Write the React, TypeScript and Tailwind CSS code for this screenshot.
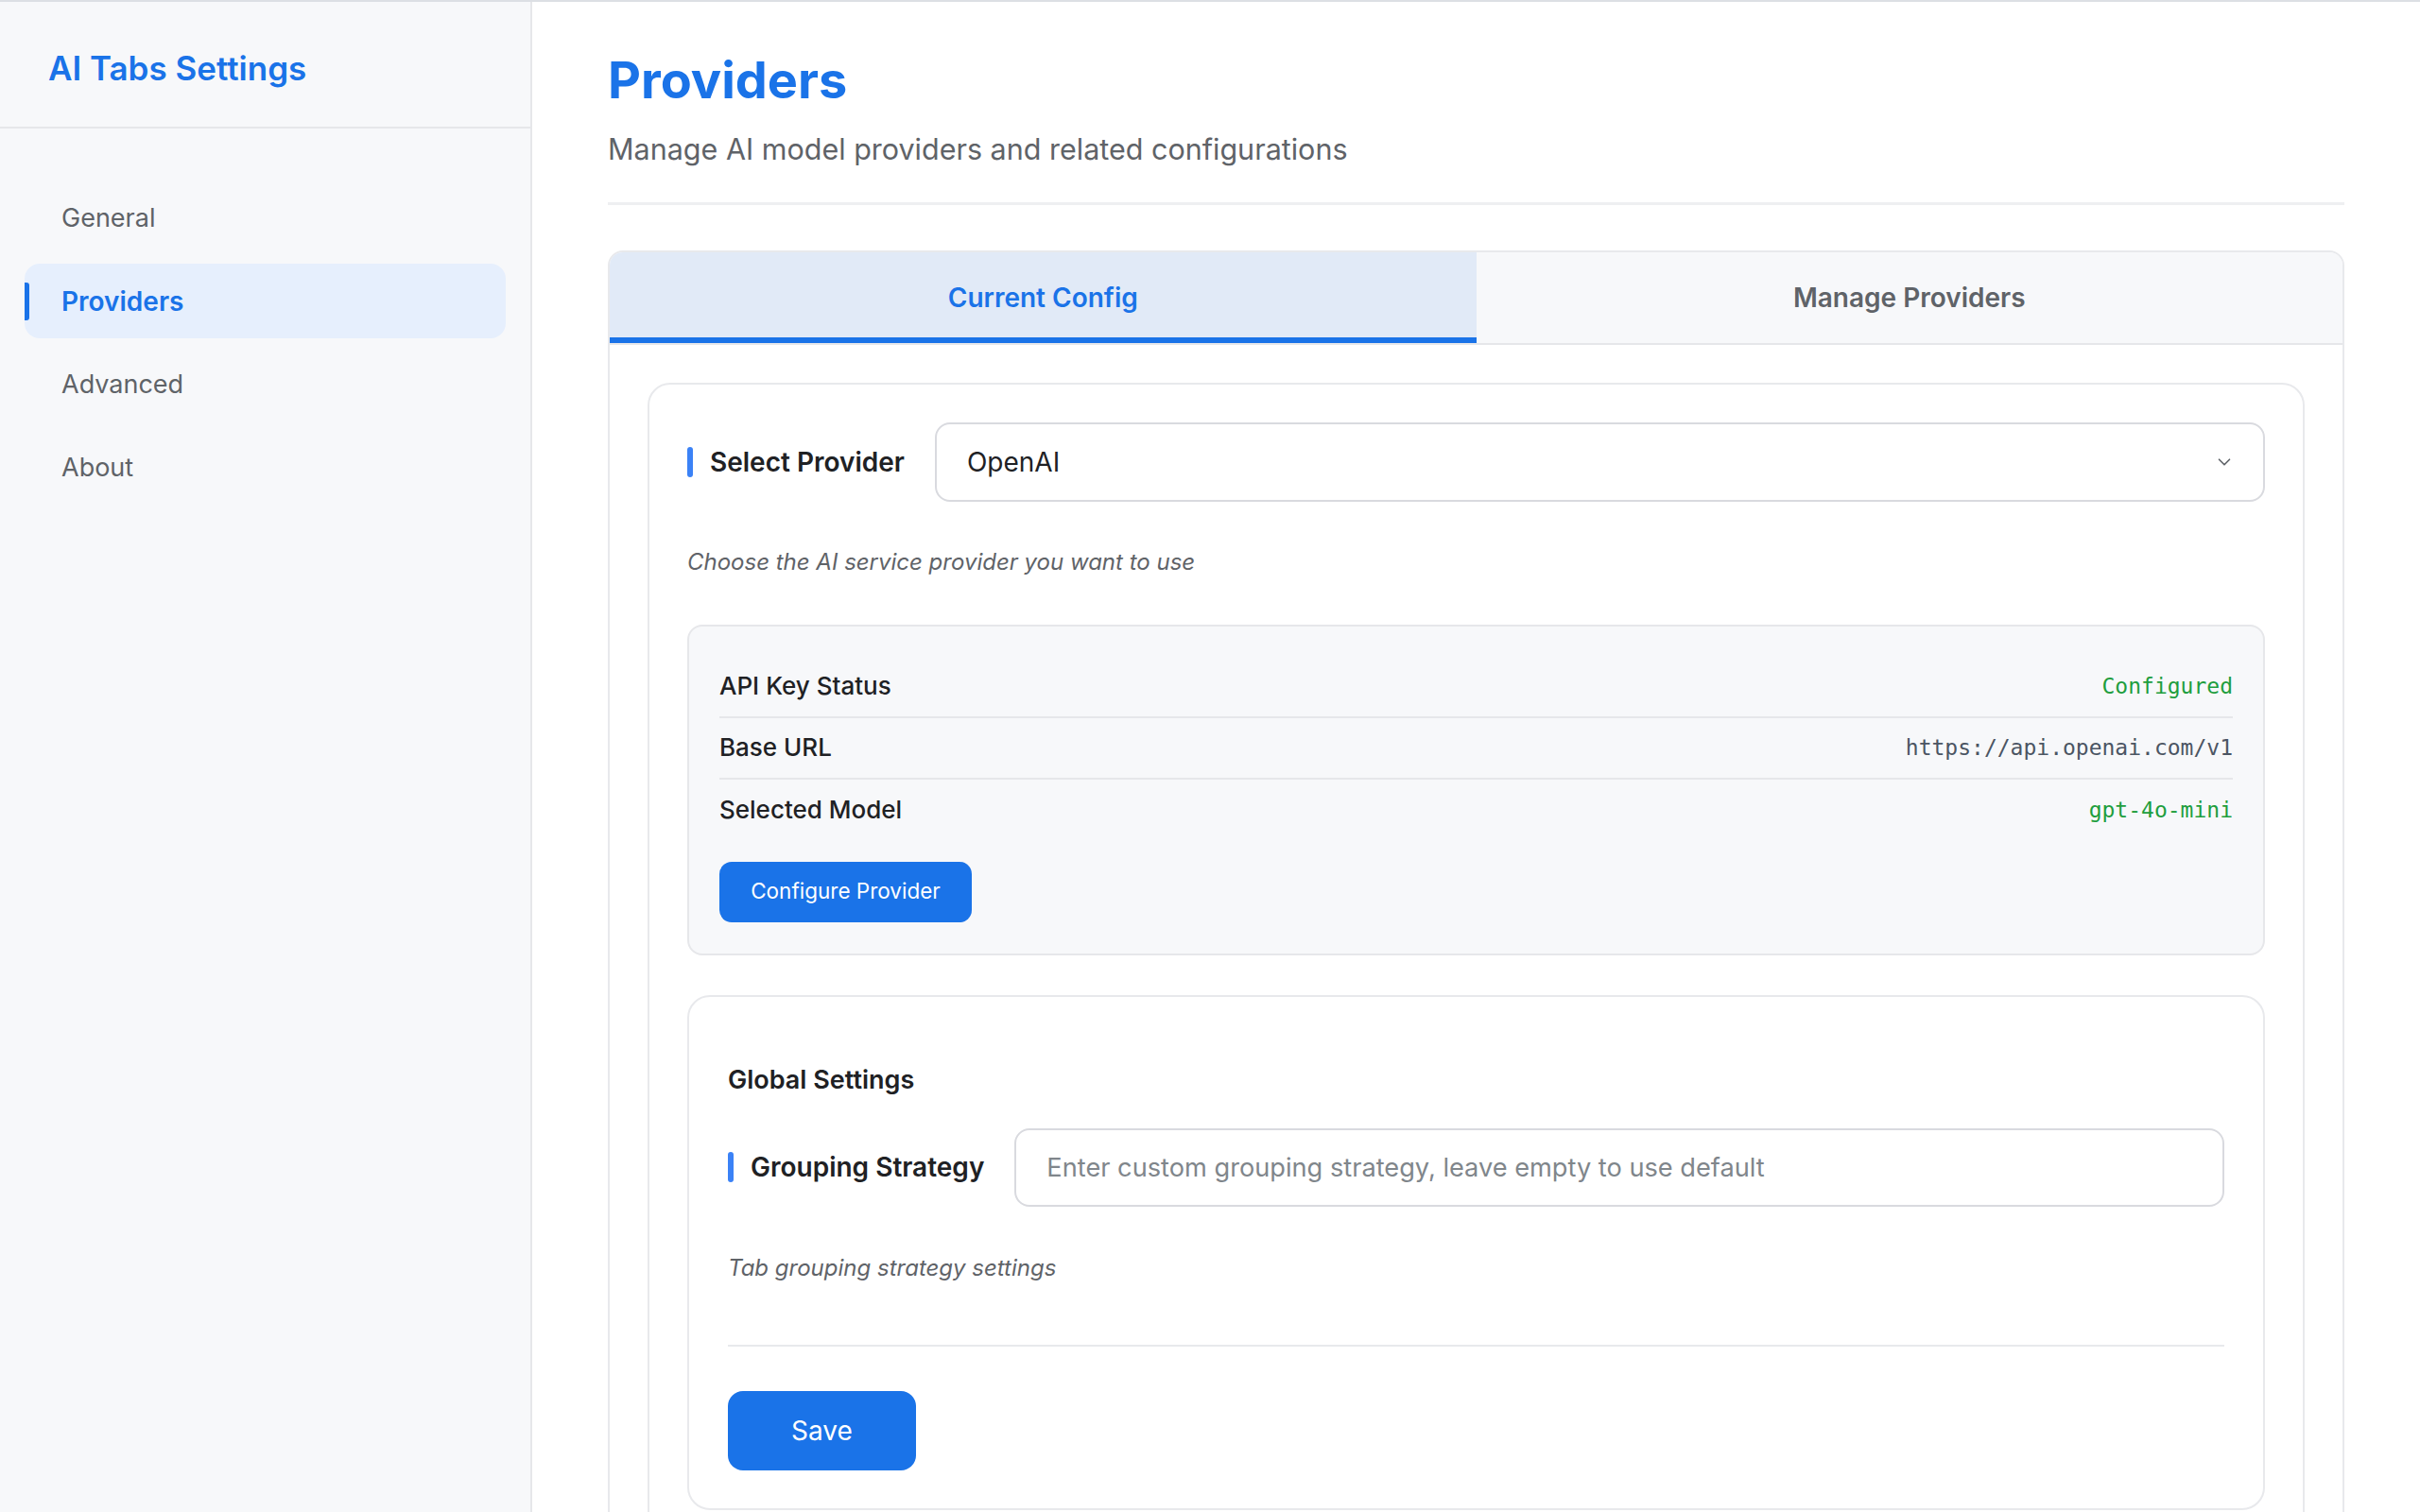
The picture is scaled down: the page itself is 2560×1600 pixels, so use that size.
import { ChevronDown } from "lucide-react";

const navItems = ["General", "Providers", "Advanced", "About"];

const sans = "font-['Inter','Noto_Sans',sans-serif]";

const InfoRow = ({ label, value, tone, last }: { label: string; value: string; tone: string; last?: boolean }) => (
  <div className={`flex items-center justify-between h-[65px] ${last ? "" : "border-b-2 border-[#e6e7ea]"}`}>
    <span className="text-[26px] font-medium text-[#202124] leading-none">{label}</span>
    <span className={`font-['DejaVu_Sans_Mono',monospace] text-[23px] leading-none ${tone}`}>{value}</span>
  </div>
);

const FieldLabel = ({ text }: { text: string }) => (
  <div className="flex items-center gap-[18px] shrink-0">
    <span className="w-[6px] h-[32px] rounded-full bg-[#3b82f6]" />
    <span className="text-[28px] font-semibold text-[#202124] leading-none">{text}</span>
  </div>
);

export default function App() {
  return (
    <div className={`${sans} flex min-h-screen w-full border-t-2 border-[#dcdfe4] bg-white`}>
      {/* Sidebar */}
      <aside className="w-[563px] shrink-0 bg-[#f7f8fa] border-r-2 border-[#e6e7ea]">
        <div className="h-[134px] border-b-2 border-[#e6e7ea] pl-[51px] pt-[53px]">
          <h1 className="text-[35px] font-semibold text-[#1a73e8] leading-none">AI Tabs Settings</h1>
        </div>
        <nav className="flex flex-col gap-[9px] px-[26px] pt-[55px]">
          {navItems.map((item) => {
            const active = item === "Providers";
            return (
              <div
                key={item}
                className={`relative flex items-center h-[79px] pl-[39px] rounded-[16px] leading-none ${
                  active ? "bg-[#e6effd] text-[#1a73e8] font-semibold text-[28px]" : "text-[#5f6368] text-[27px]"
                }`}
              >
                {active && <span className="absolute left-0 top-[20px] w-[5px] h-[40px] rounded-r-[3px] bg-[#1a73e8]" />}
                {item}
              </div>
            );
          })}
        </nav>
      </aside>

      {/* Main */}
      <main className="flex-1 px-[80px] pt-[56px]">
        <h2 className="text-[54px] font-bold text-[#1a73e8] leading-none">Providers</h2>
        <p className="mt-[31px] text-[30.5px] text-[#5f6368] leading-none">Manage AI model providers and related configurations</p>
        <div className="mt-[40px] h-[3px] bg-[#eeeff1]" />

        <div className="mt-[48px] border-2 border-[#e8e9ec] rounded-t-[16px] overflow-hidden">
          {/* Tabs */}
          <div className="flex border-b-2 border-[#e6e7ea]">
            <div className="flex-1 h-[96px] flex items-center justify-center bg-[#e1eaf7] border-b-[6px] border-[#1a73e8] text-[28px] font-semibold text-[#1a73e8] leading-none pt-[6px]">
              Current Config
            </div>
            <div className="flex-1 h-[96px] flex items-center justify-center bg-[#f7f8fa] text-[28px] font-semibold text-[#5f6368] leading-none">
              Manage Providers
            </div>
          </div>

          <div className="p-[40px]">
            <div className="border-2 border-[#e8e9ec] rounded-[24px] px-[40px] pt-[40px] pb-[40px]">
              <div className="flex items-center gap-[32px]">
                <FieldLabel text="Select Provider" />
                <div className="flex-1 h-[84px] flex items-center justify-between border-2 border-[#d9dadf] rounded-[16px] pl-[32px] pr-[30px]">
                  <span className="text-[28px] text-[#202124] leading-none">OpenAI</span>
                  <ChevronDown size={22} strokeWidth={1.8} className="text-[#5f6368]" />
                </div>
              </div>
              <p className="mt-[52px] text-[24px] italic text-[#5f6368] leading-none">Choose the AI service provider you want to use</p>

              <div className="mt-[54px] bg-[#f7f8fa] border-2 border-[#e6e7ea] rounded-[16px] px-[32px] pt-[32px] pb-[33px]">
                <InfoRow label="API Key Status" value="Configured" tone="text-[#1e9e3e]" />
                <InfoRow label="Base URL" value="https://api.openai.com/v1" tone="text-[#4b5563]" />
                <InfoRow label="Selected Model" value="gpt-4o-mini" tone="text-[#1e9e3e]" last />
                <button className="mt-[22px] h-[64px] w-[267px] rounded-[13px] bg-[#1a73e8] text-white text-[22.5px] leading-none">
                  Configure Provider
                </button>
              </div>

              <div className="mt-[42px] border-2 border-[#e8e9ec] rounded-[24px] px-[41px] pt-[74px] pb-[40px]">
                <h3 className="text-[27px] font-semibold text-[#202124] leading-none">Global Settings</h3>
                <div className="mt-[38px] flex items-center gap-[32px]">
                  <FieldLabel text="Grouping Strategy" />
                  <input
                    className="flex-1 h-[83px] border-2 border-[#d9dadf] rounded-[16px] px-[32px] text-[27.2px] text-[#202124] placeholder:text-[#80868b] outline-none"
                    placeholder="Enter custom grouping strategy, leave empty to use default"
                  />
                </div>
                <p className="mt-[53px] text-[24px] italic text-[#5f6368] leading-none">Tab grouping strategy settings</p>
                <div className="mt-[69px] h-[2px] bg-[#e8e9ec]" />
                <button className="mt-[47px] h-[84px] w-[199px] rounded-[16px] bg-[#1a73e8] text-white text-[28px] leading-none">
                  Save
                </button>
              </div>
            </div>
          </div>
        </div>
      </main>
    </div>
  );
}
